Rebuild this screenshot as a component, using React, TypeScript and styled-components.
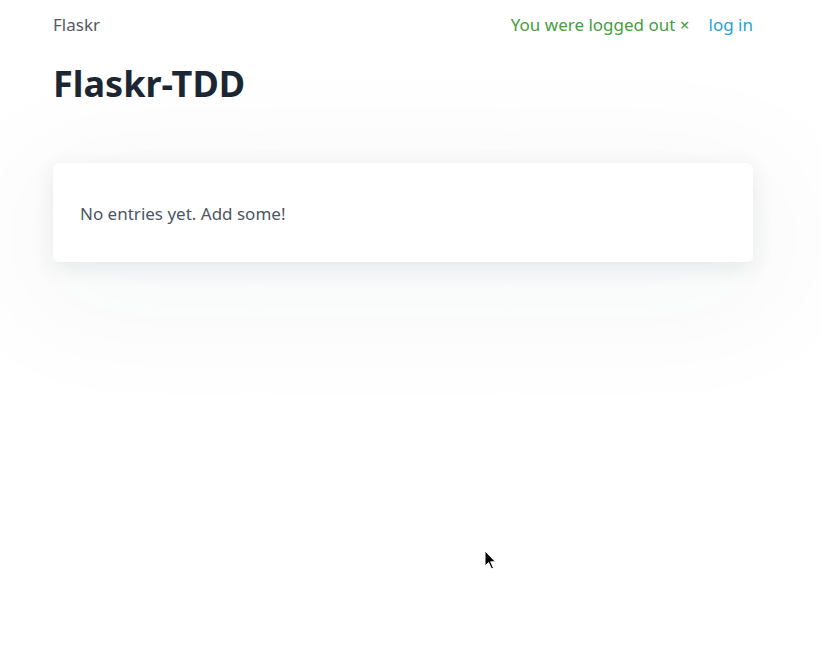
import React from "react";
import styled, { createGlobalStyle } from "styled-components";

const Global = createGlobalStyle`
  html, body { margin: 0; padding: 0; background: #ffffff; }
  body { font-family: "Noto Sans", "Open Sans", sans-serif; }
  #root { min-height: 653px; }
`;

const Page = styled.div`
  position: relative;
  min-height: 653px;
  padding-left: 53px;
  box-sizing: border-box;
`;

const Container = styled.div`
  width: 700px;
  display: flex;
  flex-direction: column;
`;

const Nav = styled.nav`
  display: flex;
  align-items: center;
  justify-content: space-between;
  height: 48px;
  font-size: 17px;
`;

const Brand = styled.a`
  color: #555a5f;
  text-decoration: none;
`;

const NavRight = styled.div`
  display: flex;
  align-items: center;
  gap: 19px;
`;

const Flash = styled.span`
  color: #44a03c;
`;

const NavLink = styled.a<{ $tone?: string }>`
  color: ${(p) => p.$tone || "#2a9fd6"};
  text-decoration: none;
`;

const Title = styled.h1`
  margin: 14px 0 0;
  font-size: 36px;
  font-weight: 700;
  color: #1c2733;
  line-height: 44px;
`;

const Card = styled.section`
  margin-top: 57px;
  height: 99px;
  background: #fff;
  border-radius: 5px;
  padding: 0 27px;
  display: flex;
  align-items: center;
  box-shadow: 0 0 1px rgba(0, 0, 0, 0.06), 0 6px 22px rgba(30, 40, 60, 0.09),
    0 25px 130px 30px rgba(40, 60, 90, 0.035);
`;

const Empty = styled.p`
  margin: 2px 0 0;
  font-size: 17px;
  color: #4c5661;
`;

const Cursor = styled.svg`
  position: absolute;
  left: 484px;
  top: 550px;
`;

export default function App() {
  return (
    <>
      <Global />
      <Page>
        <Container>
          <Nav>
            <Brand href="#">Flaskr</Brand>
            <NavRight>
              <Flash>You were logged out ×</Flash>
              <NavLink href="#">log in</NavLink>
            </NavRight>
          </Nav>
          <Title>Flaskr-TDD</Title>
          <Card>
            <Empty>No entries yet. Add some!</Empty>
          </Card>
        </Container>
        <Cursor width="14" height="22" viewBox="0 0 14 22">
          <path
            d="M1 1 L1 16 L4.5 12.5 L7.5 19 L9.5 18 L6.7 11.8 L11.5 11.8 Z"
            fill="#000"
            stroke="#fff"
            strokeWidth="1"
            strokeLinejoin="round"
          />
        </Cursor>
      </Page>
    </>
  );
}
